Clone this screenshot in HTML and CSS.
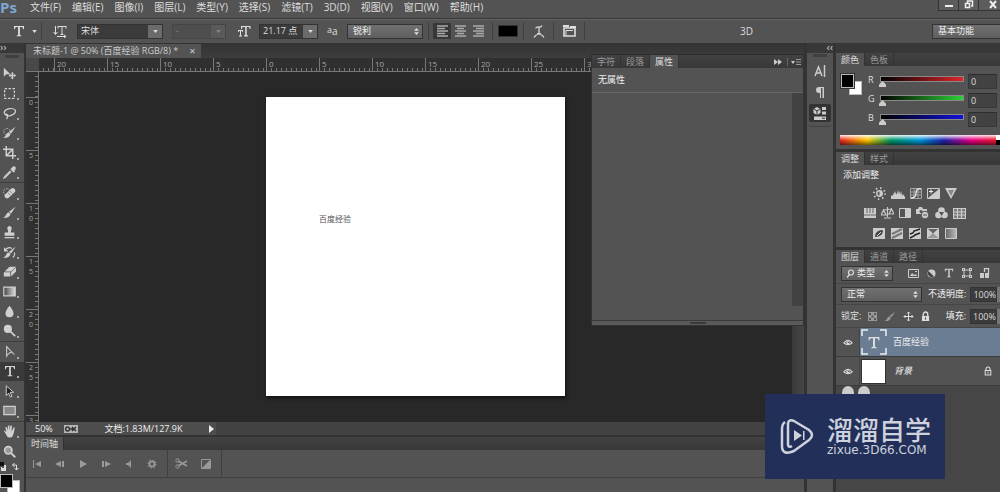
FILE: index.html
```html
<!DOCTYPE html>
<html lang="zh-CN">
<head>
<meta charset="utf-8">
<title>未标题-1 @ 50%</title>
<link rel="stylesheet" href="styles.css">
</head>
<body>
<svg class="defs" aria-hidden="true">
  <defs>
    <symbol id="down" viewBox="0 0 6 4"><path d="M0 0h6L3 4z"/></symbol>
    <symbol id="updown" viewBox="0 0 6 9"><path d="M0 3.5h6L3 0zM0 5.5h6L3 9z"/></symbol>
    <symbol id="eye" viewBox="0 0 12 10"><path d="M1 5.5Q6-1 11 5.500Q6 10 1 5.500z" fill="none" stroke="currentColor" stroke-width="1.300"/><circle cx="6" cy="5" r="2.200"/><path d="M6 3.500v1.500h1.500" stroke="#444" fill="none"/></symbol>
    <symbol id="lock" viewBox="0 0 10 12"><path d="M2.500 6V3.500a2.500 2.500 0 0 1 5 0V6" fill="none" stroke="currentColor" stroke-width="1.500"/><path d="M1 5.500h8V11H1z"/><path d="M5 7v2.500" stroke="#444" stroke-width="1.200"/></symbol>
    <symbol id="lock-open" viewBox="0 0 10 12"><path d="M2.500 5.500V3.500a2.500 2.500 0 0 1 5 0v2M1.500 5.500h7v5.500h-7zM5 7v2.500" fill="none" stroke="currentColor" stroke-width="1.300"/></symbol>
    <symbol id="serif-t" viewBox="0 0 12 12"><path d="M1 1h10v3.200h-.8Q10 2 8.500 2H6.900v7.700q0 .6 1.500.7v.8H3.600v-.8q1.500-.1 1.500-.7V2H3.500Q2 2 1.800 4.200H1z"/></symbol>
    <symbol id="brush" viewBox="0 0 16 16"><path d="M15.500 1 7.500 7 9.800 9.500zM7 7.600 9.200 10Q8 15 0 14.500 3.500 13 4 10.500 5 8 7 7.600z"/></symbol>
  </defs>
</svg>

<header class="menubar">
  <span class="logo">Ps</span>
  <nav class="menus">
    <button>文件(F)</button><button>编辑(E)</button><button>图像(I)</button><button>图层(L)</button><button>类型(Y)</button><button>选择(S)</button><button>滤镜(T)</button><button>3D(D)</button><button>视图(V)</button><button>窗口(W)</button><button>帮助(H)</button>
  </nav>
  <div class="window-buttons">
    <button aria-label="最小化"><svg width="10" height="10"><path d="M1 5h8v2H1z"/></svg></button>
    <button aria-label="还原"><svg width="10" height="10"><path d="M3.500 3V1h5v5H7M1.500 3.500h4v4h-4z" fill="none" stroke="currentColor" stroke-width="1.500"/></svg></button>
    <button aria-label="关闭"><svg width="10" height="10"><path d="m2 1 6 7M8 1 2 8" stroke="currentColor" stroke-width="2"/></svg></button>
  </div>
</header>

<div class="options">
  <button class="preset" aria-label="文字工具"><svg width="12" height="12"><use href="#serif-t"/></svg><svg width="5" height="3"><use href="#down"/></svg></button>
  <i class="vr"></i>
  <button class="orient" aria-label="文字方向"><svg width="14" height="13" viewBox="0 0 14 13"><path d="M2.500 1v8M.500 7l2 2.500 2-2.500M5 1.500h8M5 1v2.500M13 1v2.500M9 1.500v8M7.500 9.500h3M4 11.500h9M11 9.800l2 1.700-2 1.500" fill="none" stroke="currentColor"/></svg></button>
  <span class="combo family"><select aria-label="字体"><option>宋体</option></select><span class="drop"><svg width="5" height="3"><use href="#down"/></svg></span></span>
  <span class="combo style off"><select aria-label="字形" disabled><option>-</option></select><span class="drop"><svg width="5" height="3"><use href="#down"/></svg></span></span>
  <svg class="size-icon" width="13" height="12" viewBox="0 0 13 12"><path d="M3 1h9.500v3h-.8L11 2H8.700v8l1.300.6v.9H6v-.9l1.200-.6V2H4.500L3.800 4H3zM0 5h5v2h-.6L4 6H3v4.500h1v1H1v-1h1V6H1L.6 7H0z"/></svg>
  <span class="combo size"><select aria-label="字号"><option>21.17 点</option></select><span class="drop"><svg width="5" height="3"><use href="#down"/></svg></span></span>
  <label class="aa" for="aa"><span>a</span>a</label>
  <span class="picker sharp"><select id="aa"><option>锐利</option></select><svg width="5" height="7"><use href="#updown"/></svg></span>
  <i class="vr"></i>
  <div class="aligns">
    <button class="on" aria-label="左对齐"><svg width="11" height="12"><path d="M0 1h11M0 3.500h8M0 6h11M0 8.500h8M0 11h11" stroke="currentColor" stroke-width="1.500"/></svg></button>
    <button aria-label="居中"><svg width="11" height="12"><path d="M0 1h11M2 3.500h7M0 6h11M2 8.500h7M0 11h11" stroke="currentColor" stroke-width="1.500"/></svg></button>
    <button aria-label="右对齐"><svg width="11" height="12"><path d="M0 1h11M3 3.500h8M0 6h11M3 8.500h8M0 11h11" stroke="currentColor" stroke-width="1.500"/></svg></button>
  </div>
  <i class="vr"></i>
  <button class="ink" aria-label="文本颜色"></button>
  <i class="vr"></i>
  <button class="warp" aria-label="变形文字"><svg width="12" height="13" viewBox="0 0 12 13"><path d="M1 12.500Q6 5.500 11 12.500M6 9V2M2.500 3.500Q4 1.500 6 2q2 .5 3-1.500M4 8.800h4" fill="none" stroke="currentColor" stroke-width="1.200"/></svg></button>
  <i class="vr"></i>
  <button class="panels" aria-label="面板"><svg width="13" height="12"><path d="M0 0h6v2H0z"/><path d="M1 3h11v8H1z" fill="none" stroke="currentColor" stroke-width="1.600"/><path d="M7 1h6v2H7z"/><path d="M3 5.500h7M3 5v5" stroke="currentColor"/></svg></button>
  <i class="vr"></i>
  <button class="three-d">3D</button>
  <span class="picker workspace-pick"><select aria-label="工作区"><option>基本功能</option></select></span>
</div>

<main class="workspace">
  <aside class="tools">
    <div class="strip">››</div>
    <div class="toolbox">
      <i class="grip"></i>
      <div class="group g6">
        <button class="plain" aria-label="移动"><svg viewBox="0 0 16 16"><path d="M1 1v11l3-3h5zM11.500 6l2 2h-1.200v1.500H14V8.300l2 2.200-2 2.200v-1.200h-1.700V13h1.200l-2 2.500-2-2.500h1.200v-1.500H9v1.200l-2-2.200 2-2.200v1.200h1.700V8H9.500z"/></svg></button>
        <button aria-label="选框"><svg viewBox="0 0 16 16"><path d="M2 2h12v12H2z" fill="none" stroke="currentColor" stroke-width="1.500" stroke-dasharray="3 1.800"/></svg></button>
        <button aria-label="套索"><svg viewBox="0 0 16 16"><path d="M4 10C0 8 1 3 8 2s9 3 6 6-9 4-10 2 2-1 2 1-2 2-1 4" fill="none" stroke="currentColor" stroke-width="1.500"/></svg></button>
        <button aria-label="快速选择"><svg viewBox="0 0 16 16"><circle cx="5" cy="7" r="4" fill="none" stroke="currentColor" stroke-dasharray="2 1.500"/><use href="#brush"/></svg></button>
        <button aria-label="裁剪"><svg viewBox="0 0 16 16"><path d="M4 0v12h12M0 4h12v12M5 11l7-7" fill="none" stroke="currentColor" stroke-width="1.800"/></svg></button>
        <button aria-label="吸管"><svg viewBox="0 0 16 16"><path d="M10 3q3-4 5-2t-1 5l1 1-2 1-4-4 1-1z"/><path d="m9 6-7 7-1 2 2-1 7-7" fill="none" stroke="currentColor" stroke-width="1.300"/></svg></button>
      </div>
      <div class="group g8">
        <button aria-label="修复画笔"><svg viewBox="0 0 16 16"><circle cx="4.500" cy="6" r="4" fill="none" stroke="currentColor" stroke-dasharray="2 1.500"/><path d="m5 11 7-6.500" stroke="currentColor" stroke-width="6" stroke-linecap="round"/><path d="m6 7 3 3M8.500 5l3 3" stroke="#777"/></svg></button>
        <button aria-label="画笔"><svg viewBox="0 0 16 16"><use href="#brush"/></svg></button>
        <button aria-label="图章"><svg viewBox="0 0 16 16"><path d="M8 0a3 3 0 0 1 2 5l-.5 3H14v4H2V8h4.500L6 5a3 3 0 0 1 2-5zM2 13.500h12V15H2z"/></svg></button>
        <button aria-label="历史记录画笔"><svg viewBox="0 0 16 16"><use href="#brush"/><path d="M2 6q4-6 9-3M2 2v4h4M14 8q1 4-2 6" fill="none" stroke="currentColor" stroke-width="1.500"/></svg></button>
        <button aria-label="橡皮擦"><svg viewBox="0 0 16 16"><path d="M8 2h8l-6 6H2zM1 9h8v5H1zM10 9l6-6v5l-6 6z"/></svg></button>
        <button aria-label="渐变"><svg viewBox="0 0 16 16"><linearGradient id="g1"><stop stop-color="#444"/><stop offset="1" stop-color="#ddd"/></linearGradient><path d="M1 2.500h14v11H1z" fill="url(#g1)" stroke="currentColor" stroke-width="1.500"/></svg></button>
        <button aria-label="模糊"><svg viewBox="0 0 16 16"><path d="M8 1q5 6 5 9.500a5 4.500 0 0 1-10 0Q3 7 8 1z"/></svg></button>
        <button aria-label="减淡"><svg viewBox="0 0 16 16"><circle cx="6" cy="6" r="5"/><path d="m9 9 6 6" stroke="currentColor" stroke-width="2"/></svg></button>
      </div>
      <div class="group g4">
        <button aria-label="钢笔"><svg viewBox="0 0 16 16"><path d="M4.500 15V2L14 12M4.500 13q4-4 6-4" fill="none" stroke="currentColor" stroke-width="1.300"/></svg></button>
        <button class="on" aria-label="文字"><svg viewBox="0 0 12 12"><use href="#serif-t"/></svg></button>
        <button aria-label="路径选择"><svg viewBox="0 0 16 16"><path d="M4 1v12l3-3 2 5 2-1-2-5h4z" fill="#222" stroke="currentColor" stroke-width="1.200"/></svg></button>
        <button aria-label="矩形"><svg viewBox="0 0 16 16"><path d="M1 3h14v10H1z" fill="#888" stroke="currentColor" stroke-width="1.500"/></svg></button>
      </div>
      <div class="group g2">
        <button aria-label="抓手"><svg viewBox="0 0 16 16"><path d="M1 7q1-1 3 2L3 3q1-1 2 0l1 4V1q1-1 2 0v6l1-6q1-1 2 0l-.5 7L13 3q1-.5 1.500.5L13 11q-1 4-4 4.500-4 0-5-3.500z"/></svg></button>
        <button class="plain" aria-label="缩放"><svg viewBox="0 0 16 16"><circle cx="6.500" cy="6.500" r="4.500" fill="#999" stroke="currentColor" stroke-width="2"/><path d="m10 10 5 5" stroke="currentColor" stroke-width="2.500"/></svg></button>
      </div>
      <div class="colors">
        <svg width="20" height="9"><path d="M0 0h4v4H0z" fill="#111"/><path d="M1 5h1v1h2V3h2v6H1z"/><path d="M12.500 3h4v5M14.500 1l-2 2 2 2M14.500 6l2 2 2-2" fill="none" stroke="currentColor"/></svg>
        <div class="swatches"><i class="back"></i><i class="front"></i></div>
      </div>
    </div>
  </aside>

  <section class="center">
    <div class="doc-tabs"><div class="doc-tab">未标题-1 @ 50% (百度经验 RGB/8) * <button aria-label="关闭">×</button></div></div>
    <div class="ruler-h">
      <i class="corner"></i><i class="lead"></i><span>20</span><span>15</span><span>10</span><span>5</span><span>0</span><span>5</span><span>10</span><span>15</span><span>20</span><span>25</span><span>30</span><span></span><span></span><span></span>
    </div>
    <div class="doc">
      <div class="ruler-v"><i class="lead"></i><span>0</span><span>5</span><span>1<br>0</span><span>1<br>5</span><span>2<br>0</span><span>2<br>5</span><span>3</span></div>
      <div class="canvas"><div class="page">百度经验</div></div>
      <div class="scroll-v"></div>
    </div>
    <div class="status">
      <div class="status-in"><span>50%</span><svg width="14" height="8"><path d="M0 0h14v8H0z" fill="#b5b5b5"/><path d="M3.500 2a2 2 0 1 0 .1 0M6 4h3M8 2l4 4M12 2 8 6" fill="none" stroke="#333" stroke-width="1.500"/></svg><span class="info">文档:1.83M/127.9K</span><svg width="5" height="8"><path d="M0 0v8l5-4z"/></svg></div>
    </div>
    <div class="timeline">
      <div class="tabs"><button class="on">时间轴</button></div>
      <div class="transport">
        <button aria-label="第一帧"><svg width="10" height="8"><path d="M1 0h1v8H1zM9 1v6L3 4z"/></svg></button>
        <button aria-label="上一帧"><svg width="10" height="8"><path d="M7 1h2v6H7zM6 1v6L0 4z"/></svg></button>
        <button aria-label="播放"><svg width="10" height="8"><path d="M2 0v8l7-4z"/></svg></button>
        <button aria-label="下一帧"><svg width="10" height="8"><path d="M1 1h2v6H1zM4 1v6l6-3z"/></svg></button>
        <button aria-label="静音"><svg width="10" height="8"><path d="M2 3h2l3-3v8L4 5H2z"/></svg></button>
        <button aria-label="设置"><svg width="10" height="10"><circle cx="5" cy="5" r="2.500" fill="none" stroke="currentColor" stroke-width="1.600"/><circle cx="5" cy="5" r="3.800" fill="none" stroke="currentColor" stroke-width="1.200" stroke-dasharray="1.500 1.480"/></svg></button>
        <i class="vr"></i>
        <button aria-label="拆分"><svg width="13" height="11"><path d="m3 3 9 5M3 8l9-5" stroke="currentColor" stroke-width="1.500"/><circle cx="2.500" cy="2.500" r="1.700" fill="none" stroke="currentColor"/><circle cx="2.500" cy="8.500" r="1.700" fill="none" stroke="currentColor"/></svg></button>
        <button aria-label="过渡"><svg width="10" height="10"><path d="M.500.500h9v9h-9z" fill="none" stroke="currentColor"/><path d="M9 1v8H1z"/></svg></button>
        <i class="vr"></i>
      </div>
    </div>

    <div class="float">
      <div class="tabs"><button>字符</button><button>段落</button><button class="on">属性</button><svg class="fold" width="28" height="8"><path d="M0 1v6l4-3zM4 1v6l4-3z"/><path d="M13.500 0v8" stroke="#666"/><path d="M17 3h4l-2 3z"/><path d="M22 1.500h5M22 4h5M22 6.500h5" stroke="#999"/></svg></div>
      <h2>无属性</h2>
      <div class="float-body"><i></i></div>
      <div class="float-foot"><i></i></div>
    </div>
  </section>

  <aside class="dock">
    <div class="strip">‹‹</div>
    <div class="dock-body">
      <i class="grip"></i>
      <button aria-label="字符"><svg width="12" height="12" viewBox="0 0 12 12"><path d="m1 11 3.500-9L8 11M2 8h5M10.500 0v12" fill="none" stroke="currentColor" stroke-width="1.500"/></svg></button>
      <button aria-label="段落"><svg width="10" height="12"><path d="M9 1H4a3 3 0 0 0 0 6h1v5h1V2h1.500v10H9z"/></svg></button>
      <button class="on" aria-label="属性"><svg width="14" height="13"><path d="m4 0 3.500 2v4L4 8 .500 6V2z"/><path d="m1 2 3 2 3-2M4 4v4" stroke="#333" fill="none"/><path d="M9 0h4v3H9zM9 4.500h4v3H9zM1 9.500h12V13H1z"/><path d="M9 11.200h3" stroke="#333"/></svg></button>
    </div>
  </aside>

  <aside class="side">
    <div class="strip"></div>
    <section class="panel color">
      <div class="tabs"><button class="on">颜色</button><button>色板</button></div>
      <div class="color-body">
        <div class="pair"><i class="back"></i><i class="front"></i></div>
        <div class="channels">
          <label for="r">R</label><input class="red" type="range" min="0" max="255" value="0" aria-label="红"><input id="r" type="text" value="0">
          <label for="g">G</label><input class="green" type="range" min="0" max="255" value="0" aria-label="绿"><input id="g" type="text" value="0">
          <label for="b">B</label><input class="blue" type="range" min="0" max="255" value="0" aria-label="蓝"><input id="b" type="text" value="0">
        </div>
      </div>
      <div class="spectrum"><i></i></div>
    </section>
    <section class="panel adjust">
      <div class="tabs"><button class="on">调整</button><button>样式</button></div>
      <h2>添加调整</h2>
      <div class="adj-row">
        <svg width="13" height="13" viewBox="0 0 14 14"><circle cx="7" cy="7" r="3" fill="none" stroke="currentColor" stroke-width="1.500"/><path d="M7 4a3 3 0 0 1 0 6z"/><circle cx="7" cy="7" r="6" fill="none" stroke="currentColor" stroke-width="2" stroke-dasharray="1.500 3.210"/></svg>
        <svg width="14" height="10"><path d="M0 10V7l1-1 1 1V4l1 2V2l1 3 1-3v4l1-2V1l1 4 1-4v4l1-3 1 4 1-4v5l1-2 2 3v2z"/></svg>
        <svg width="12" height="11"><path d="M.500.500h11v10H.500zM.500 4h11M.500 7h11M4 .500v10M8 .500v10" fill="none" stroke="#a5a5a5"/><path d="M1 10q5 0 5-5t5-4" fill="none" stroke="#eee" stroke-width="1.300"/></svg>
        <svg width="13" height="11"><path d="M.500.500h12v10H.500z" fill="#555" stroke="currentColor"/><path d="M12 1v9H1z"/><path d="M2 3.500h4M4 1.500v4" stroke="#eee"/></svg>
        <svg width="12" height="11"><path d="M0 0h12L6 11z"/><path d="M3 2h6L6 8z" fill="#888"/></svg>
      </div>
      <div class="adj-row">
        <svg width="12" height="10"><path d="M0 0h12v10H0z"/><path d="M3 0v5M6 0v5M9 0v5M0 7h12" stroke="#666"/></svg>
        <svg width="13" height="12"><path d="M6.500 0v10M3 11h7M2 3l9-1M0 8l2.500-5L5 8zM8 7l2.500-5L13 7z" fill="none" stroke="currentColor" stroke-width="1.200"/></svg>
        <svg width="12" height="10"><path d="M.500.500h11v9H.500z" fill="#555" stroke="currentColor"/><path d="M6 1h5v8H6z"/></svg>
        <svg width="14" height="12"><path d="M0 2h2l1-2h3l1 2h4v5H0z"/><circle cx="9" cy="8" r="3.800" stroke="#555"/><circle cx="5" cy="4.500" r="1.500" fill="#555"/><path d="M7 8h4" stroke="#555"/></svg>
        <svg width="13" height="12"><circle cx="6.500" cy="3.500" r="3.300"/><circle cx="3.500" cy="8" r="3.300"/><circle cx="9.500" cy="8" r="3.300"/><path d="M4 5h5L6.500 9z" fill="#555"/></svg>
        <svg width="13" height="11"><path d="M.500.500h12v10H.500zM.500 4h12M.500 7h12M4.500.500v10M8.500.500v10" fill="#777" stroke="currentColor" stroke-width="1.200"/></svg>
      </div>
      <div class="adj-row wide">
        <svg width="12" height="11"><path d="M0 0h12v11H0z"/><path d="M2 9q0-7 8-7 0 7-8 7z" fill="#444"/><path d="m4 8 4-4" stroke="#ddd"/></svg>
        <svg width="12" height="11"><path d="M0 0h12v11H0z"/><path d="m1 6 10-5M1 10l10-5" stroke="#777" stroke-width="2"/></svg>
        <svg width="12" height="11"><path d="M0 0h12v11H0z"/><path d="m1 6 3-1 1-2 6-2M1 10l4-2 1-1 5-2" fill="none" stroke="#222" stroke-width="1.500"/></svg>
        <svg width="12" height="11"><path d="M.500.500h11v10H.500z" fill="#666" stroke="currentColor"/><path d="M1 1v9l5-4.500zM11 1v9L6 5.500z"/><path d="M1 10l5-4.500 5 4.500z" fill="#999"/></svg>
        <svg width="12" height="11"><linearGradient id="g2"><stop stop-color="#666"/><stop offset="1" stop-color="#bbb"/></linearGradient><path d="M.500.500h11v10H.500z" fill="url(#g2)" stroke="currentColor"/></svg>
      </div>
    </section>
    <section class="panel layers">
      <div class="tabs"><button class="on">图层</button><button>通道</button><button>路径</button></div>
      <div class="row filter">
        <span class="picker kind"><svg width="8" height="9"><circle cx="5" cy="3.500" r="2.500" fill="none" stroke="currentColor" stroke-width="1.200"/><path d="M3.500 5.500 1 8.500" stroke="currentColor" stroke-width="1.200"/></svg><select aria-label="类型"><option>类型</option></select><svg width="5" height="7"><use href="#updown"/></svg></span>
        <div class="filters">
          <svg width="11" height="9"><path d="M.500.500h10v8H.500z" fill="none" stroke="currentColor"/><path d="m2 7 2-3 2 2 2-1 1 2zM7 2h2v1H7z"/></svg>
          <svg width="9" height="9"><circle cx="4.500" cy="4.500" r="4"/><path d="M1.500 2a4 4 0 0 0 5.500 5.500z" fill="#444"/></svg>
          <svg width="10" height="10"><use href="#serif-t"/></svg>
          <svg width="10" height="10"><path d="M2 2h6v6H2z" fill="none" stroke="currentColor"/><path d="M0 0h3v3H0zM7 0h3v3H7zM0 7h3v3H0zM7 7h3v3H7z"/><path d="M1 1h1v1H1zM8 1h1v1H8zM1 8h1v1H1zM8 8h1v1H8z" fill="#555"/></svg>
          <svg width="10" height="10"><path d="M4.500 4V.500h4V6h-3" fill="none" stroke="currentColor" stroke-width="1.300"/><path d="M0 5h4v5H0zM5 5h4v5H5z"/></svg>
        </div>
      </div>
      <div class="row blend">
        <span class="picker mode"><select aria-label="混合模式"><option>正常</option></select><svg width="5" height="7"><use href="#updown"/></svg></span>
        <label for="op">不透明度:</label><input id="op" type="text" value="100%"><i class="stub"></i>
      </div>
      <div class="row locks">
        <span>锁定:</span>
        <svg width="9" height="9"><path d="M0 0h9v9H0z" fill="#999"/><path d="M1 1h2v2H1zM6 1h2v2H6zM3.500 3.500h2v2h-2zM1 6h2v2H1zM6 6h2v2H6z" fill="#555"/></svg>
        <svg class="dim" width="12" height="11"><use href="#brush"/></svg>
        <svg width="11" height="11"><path d="M5.500 1v9M1 5.500h9M4 2.500 5.500 1 7 2.500M4 8.500 5.500 10 7 8.500M2.500 4 1 5.500 2.500 7M8.500 4 10 5.500 8.500 7" fill="none" stroke="currentColor"/></svg>
        <svg width="9" height="11"><use href="#lock"/></svg>
        <label for="fill">填充:</label><input id="fill" type="text" value="100%"><i class="stub"></i>
      </div>
      <div class="layer on">
        <button class="vis" aria-label="可见"><svg width="10" height="9"><use href="#eye"/></svg></button>
        <div class="thumb type"><svg class="brackets" viewBox="0 0 26 26"><path d="M1 7V1h6M19 1h6v6M25 19v6h-6M7 25H1v-6" fill="none" stroke="#eee" stroke-width="1.500"/></svg><svg width="14" height="13"><use href="#serif-t"/></svg></div>
        <span class="name">百度经验</span>
      </div>
      <div class="layer">
        <button class="vis" aria-label="可见"><svg width="10" height="9"><use href="#eye"/></svg></button>
        <div class="thumb white"></div>
        <span class="name bg">背景</span>
        <svg class="locked" width="8" height="10"><use href="#lock-open"/></svg>
      </div>
      <div class="empty"><i></i><i></i></div>
    </section>
  </aside>
</main>

<div class="watermark">
  <svg width="34" height="36" viewBox="0 0 34 36"><path d="M8 5q1-4 6-2l15 9q6 5 0 10L14 33q-12 5-12-5V11q0-5 3-7" fill="none" stroke="currentColor" stroke-width="2.500"/><path d="M8 5v22q1 3 4 1" fill="none" stroke="currentColor" stroke-width="2.500"/><path d="M14 12v11l8-5.500zM23 13h1.500v9H23z"/></svg>
  <div><strong>溜溜自学</strong><span>zixue.3D66.COM</span></div>
</div>
</body>
</html>
```

FILE: styles.css
```css
* { box-sizing: border-box; }
html, body { height: 100%; }
body {
  margin: 0;
  display: flex;
  flex-direction: column;
  overflow: hidden;
  background: #535353;
  color: #dedede;
  font: 9px/12px "Open Sans", "Noto Sans CJK SC", sans-serif;
}
button, select, input { font: inherit; color: inherit; margin: 0; padding: 0; border: 0; background: none; border-radius: 0; }
select { appearance: none; outline: 0; opacity: 1; min-width: 0; }
button { display: flex; align-items: center; justify-content: center; }
svg { display: block; fill: currentColor; flex: none; }
i { display: block; flex: none; }
h2 { margin: 0; font-size: 9px; font-weight: 400; line-height: 12px; color: #eee; }
.defs { position: absolute; width: 0; height: 0; }

.menubar { display: flex; height: 18px; flex: none; }
.logo { width: 30px; font: 700 15px/14px "Open Sans", sans-serif; color: #7ea6d3; }
.menus { display: flex; gap: 11px; font-size: 10px; height: 14px; }
.window-buttons { display: flex; margin-left: auto; height: 11px; border: 1px solid #333; border-top: 0; background: #5c5c5c; color: #eee; margin-right: -8px; }
.window-buttons button { width: 20px; border-right: 1px solid #333; }
.window-buttons button:last-child { width: 28px; }

.options { display: flex; align-items: center; height: 25px; flex: none; border-top: 1px solid #383838; box-shadow: inset 0 1px #626262; padding-left: 13px; }
.vr { width: 1px; height: 18px; background: #404040; }
.preset { gap: 7px; width: 28px; justify-content: flex-start; }
.orient { width: 35px; }
.combo, .picker { display: flex; height: 15px; border: 1px solid #333; flex: none; align-items: center; }
.combo { background: #3b3b3b; }
.combo select { flex: 1; height: 13px; padding-left: 3px; }
.drop { width: 14px; height: 13px; background: #6b6b6b; display: flex; align-items: center; justify-content: center; }
.family { width: 86px; margin-right: 9px; }
.style { width: 54px; }
.off { background: #4e4e4e; border-color: #464646; color: #888; }
.off .drop { background: #5a5a5a; }
.size-icon { margin: 0 8px 0 12px; }
.size { width: 59px; }
.aa { display: flex; width: 29px; padding-left: 9px; font-size: 10px; }
.aa span { font-size: 9px; line-height: 9px; }
.picker { background: linear-gradient(#707070, #5f5f5f); padding-right: 3px; }
.picker select { flex: 1; height: 13px; padding-left: 5px; color: #eee; }
.sharp { width: 76px; margin-right: 5px; }
.aligns { display: flex; margin: 0 5px 0 4px; color: #aaa; }
.aligns button { width: 18px; height: 16px; }
.aligns .on { background: #383838; }
.ink { width: 20px; height: 12px; background: #000; margin: 0 5px; border: 1px solid #333; }
.warp { width: 29px; }
.panels { width: 30px; }
.three-d { margin-left: auto; font-size: 10px; }
.workspace-pick { width: 72px; margin: 0 -4px 0 179px; }

.workspace { flex: 1; min-height: 0; display: flex; background: #333; }
.strip { height: 10px; flex: none; background: #383838; font-size: 11px; line-height: 8px; color: #ccc; }
.grip { width: 14px; height: 3px; background: #404040; margin: 1px auto 0; flex: none; }
.tools { width: 24px; margin-right: 2px; display: flex; flex-direction: column; flex: none; }
.toolbox { flex: 1; min-height: 0; display: flex; flex-direction: column; background: #535353; padding-top: 1px; }
.toolbox .grip { margin-bottom: 6px; }
.group { display: flex; flex-direction: column; min-height: 0; border-bottom: 1px solid #3d3d3d; }
.g6 { flex: 6; } .g8 { flex: 8; } .g4 { flex: 4; } .g2 { flex: 2; border: 0; }
.group button { flex: 1; min-height: 0; padding-right: 5px; color: #d0d0d0; background: linear-gradient(#aaa, #aaa) 17px calc(100% - 3px) / 2px 2px no-repeat; }
.group button.plain { background: none; }
.group svg { width: 13px; height: 13px; }
.group button.on { background-color: #3a3a3a; }
.group button.on svg { width: 12px; height: 12px; }
.colors { height: 31px; flex: none; padding-top: 1px; }
.swatches { position: relative; height: 21px; }
.swatches i, .pair i { position: absolute; width: 13px; height: 14px; border: 1px solid #bbb; }
.back { background: #fff; }
.front { background: #000; }
.swatches .front { left: 0; top: 3px; }
.swatches .back { left: 7px; top: 9px; }

.center { position: relative; flex: 1; min-width: 0; display: flex; flex-direction: column; margin-right: 3px; }
.doc-tabs { height: 15px; flex: none; background: linear-gradient(#333, #3d3d3d); padding-top: 1px; display: flex; }
.doc-tab { display: flex; align-items: center; gap: 11px; padding: 0 6px 0 7px; background: #535353; color: #ccc; white-space: nowrap; font-size: 9px; }
.doc-tab button { font-size: 11px; }
.ruler-h { display: flex; height: 14px; flex: none; overflow: hidden; background: #303030; border-bottom: 1px solid #777; color: #a5a5a5; font-size: 8px; line-height: 11px; }
.corner { width: 13px; background: #484848; }
.ruler-h .lead { width: 15px; }
.ruler-h span { flex: none; width: 53px; padding-left: 2px; border-left: 1px solid #777; }
.ruler-h span, .ruler-h .lead { background: repeating-linear-gradient(90deg, transparent 0 4px, #777 4px 5px) left bottom / 100% 3px no-repeat; }
.doc { flex: 1; min-height: 0; display: flex; }
.ruler-v { width: 13px; flex: none; overflow: hidden; background: #303030; border-right: 1px solid #777; color: #a5a5a5; font-size: 7px; line-height: 10px; display: flex; flex-direction: column; }
.ruler-v .lead { height: 25px; }
.ruler-v span { flex: none; height: 53px; padding-left: 3px; border-top: 1px solid #777; }
.ruler-v span, .ruler-v .lead { background: repeating-linear-gradient(transparent 0 4px, #777 4px 5px) right top / 3px 100% no-repeat; }
.canvas { flex: 1; min-width: 0; background: #282828; padding: 25px 0 0 227px; }
.page { width: 299px; height: 299px; padding: 116px 0 0 53px; background: #fff; color: #555; font: 8px/12px "Noto Sans CJK SC", sans-serif; box-shadow: 1px 2px 3px #111; }
.scroll-v { width: 12px; background: linear-gradient(90deg, #3a3a3a, #464646); }
.status { flex: none; height: 13px; background: #424242; display: flex; }
.status-in { display: flex; align-items: center; width: 190px; padding: 0 2px 0 9px; background: #4d4d4d; color: #eee; font-size: 9px; }
.status-in > span:first-child { width: 29px; }
.info { margin: 0 auto; }
.timeline { flex: none; border-top: 2px solid #333; background: #535353; height: 57px; }
.tabs { display: flex; height: 13px; flex: none; background: linear-gradient(#424242, #383838); color: #999; }
.tabs button { padding: 0 5px; border-right: 1px solid #333; }
.tabs .on { background: #535353; color: #ddd; }
.transport { display: flex; align-items: center; height: 28px; border-bottom: 1px solid #404040; padding-left: 6px; gap: 13px; color: #999; }
.transport .vr { height: 27px; margin: 0 -6px 0 -3px; }

.float { position: absolute; left: 565px; right: 0; top: 11px; height: 272px; display: flex; flex-direction: column; background: #535353; border: 1px solid #333; border-top-color: #2d2d2d; }
.fold { margin: 3px 1px 0 auto; color: #ccc; }
.float h2 { height: 25px; line-height: 24px; padding-left: 6px; border-bottom: 1px solid #666; font-size: 9px; }
.float-body { flex: 1; display: flex; justify-content: flex-end; padding-bottom: 14px; }
.float-body i { width: 11px; background: #424242; }
.float-foot { height: 5px; border-top: 1px solid #3a3a3a; background: #5a5a5a; }
.float-foot i { width: 16px; height: 2px; margin: 1px auto; background: #3a3a3a; }

.dock { width: 26px; margin-right: 3px; flex: none; display: flex; flex-direction: column; }
.dock .strip { text-align: right; }
.dock-body { flex: 1; background: #535353; display: flex; flex-direction: column; align-items: center; color: #ccc; }
.dock-body .grip { margin-bottom: 5px; }
.dock-body button { width: 22px; height: 18px; margin-bottom: 3px; border-radius: 2px; }
.dock-body button.on { background: #333; box-shadow: 0 4px #535353, 0 5px #404040; }

.side { width: 164px; flex: none; display: flex; flex-direction: column; overflow: hidden; }
.side .strip { height: 10px; }
.panel { background: #535353; margin-bottom: 3px; }
.color-body { display: flex; padding: 8px 3px 0 5px; }
.pair { position: relative; width: 27px; height: 24px; }
.pair .front { left: 0; top: 0; box-shadow: 0 0 0 1px #333; }
.pair .back { left: 8px; top: 7px; }
.channels { flex: 1; display: grid; grid-template-columns: 12px minmax(0, 1fr) 33px; row-gap: 4px; align-items: center; }
.channels label { line-height: 10px; padding-bottom: 4px; }
.channels input[type=text] { width: 29px; height: 15px; margin-left: 4px; padding-left: 2px; background: #424242; border: 1px solid #383838; border-top-color: #2e2e2e; }
.channels input[type=range] { appearance: none; width: 100%; min-width: 0; height: 15px; }
.channels input[type=range]::-webkit-slider-runnable-track { height: 6px; margin-bottom: 5px; border: 1px solid #888; background: linear-gradient(90deg, #000, var(--hue)); }
.channels input[type=range]::-webkit-slider-thumb { appearance: none; width: 7px; height: 6px; margin: 4px 0 0 -2px; background: #ccc; clip-path: polygon(50% 0, 100% 60%, 100% 100%, 0 100%, 0 60%); }
.red { --hue: #e0242a; } .green { --hue: #2fd136; } .blue { --hue: #1212d8; }
.spectrum { height: 10px; margin: 8px 0 0 4px; display: flex; justify-content: flex-end; background: linear-gradient(rgba(255,255,255,.9), rgba(255,255,255,0) 50%, rgba(0,0,0,.55)), linear-gradient(90deg, #e22 0, #fc0 17%, #096 32%, #09d 50%, #22a 65%, #e08 82%, #e22); }
.spectrum i { width: 4px; background: linear-gradient(#fff 50%, #000 50%); }
.color { height: 96px; flex: none; }
.adjust { height: 95px; flex: none; }
.adjust h2 { padding: 4px 0 2px 7px; }
.adj-row { display: flex; justify-content: center; align-items: center; gap: 5px; height: 20px; padding-right: 7px; color: #ccc; }
.adj-row.wide { gap: 6px; }
.adjust h2 + .adj-row { padding-top: 1px; }
.layers { flex: 1; min-height: 0; margin: 0; display: flex; flex-direction: column; }
.row { display: flex; align-items: center; height: 21px; flex: none; padding-left: 5px; border-bottom: 1px solid #464646; }
.kind { width: 52px; padding-left: 4px; }
.kind select { padding-left: 3px; }
.filters { flex: 1; display: flex; align-items: center; justify-content: space-between; padding: 0 10px 0 15px; color: #ccc; }
.mode { width: 81px; margin-right: 6px; }
.row label { margin-left: auto; color: #eee; white-space: nowrap; }
.row input { width: 27px; height: 15px; margin-left: 4px; padding-left: 2px; background: #3b3b3b; border: 1px solid #333; flex: none; }
.stub { width: 3px; height: 15px; background: #777; }
.locks { gap: 7px; height: 23px; }
.locks input { margin-left: -3px; }
.locks .stub { margin-left: -7px; }
.dim { color: #999; }
.layer { display: flex; align-items: center; height: 29px; flex: none; border-bottom: 1px solid #3c3c3c; }
.vis { width: 24px; height: 28px; background: #535353; border-right: 1px solid #444; }
.layer.on { background: #6b7d93; }
.thumb { width: 26px; height: 26px; margin: 0 6px 0 1px; display: grid; place-items: center; flex: none; }
.thumb svg { grid-area: 1 / 1; }
.brackets { width: 26px; height: 26px; }
.white { width: 25px; height: 25px; background: #fff; border: 1px solid #333; margin: 0 8px 0 1px; }
.name { color: #eee; }
.bg { font-style: italic; }
.locked { margin: 0 8px 0 auto; }
.empty { flex: 1; background: #464646; display: flex; gap: 4px; padding-left: 6px; }
.empty i { width: 12px; height: 14px; border-radius: 50%; background: #ccc; }

.watermark { position: absolute; right: 55px; bottom: 13px; width: 180px; height: 85px; display: flex; align-items: center; gap: 13px; padding: 0 0 2px 15px; background: #223059; color: #ced2de; }
.watermark div { display: flex; flex-direction: column; }
.watermark strong { font: 500 26px/28px "Noto Sans CJK SC", sans-serif; }
.watermark span { font: 12px/14px "DejaVu Sans", sans-serif; }
```
